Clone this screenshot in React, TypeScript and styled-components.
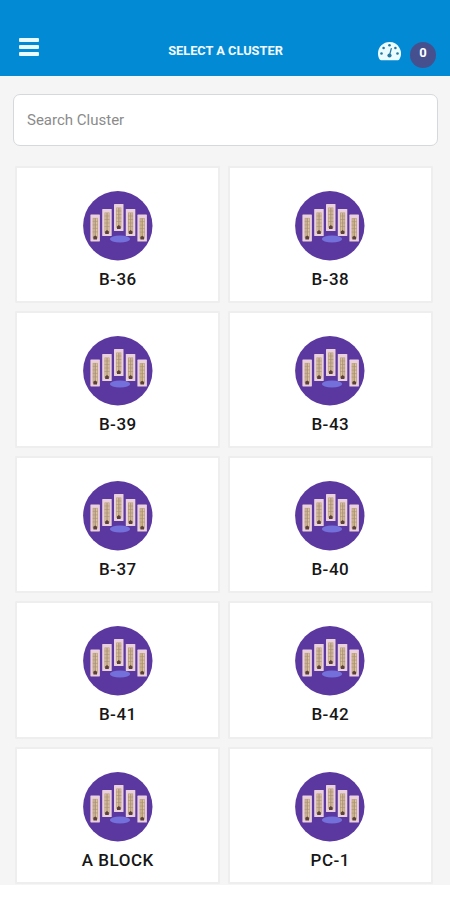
import React from "react";
import styled, { createGlobalStyle } from "styled-components";

const GlobalStyle = createGlobalStyle`
  *, *::before, *::after { box-sizing: border-box; }
  html, body { margin: 0; background: #fff; }
  body { font-family: Roboto, "Liberation Sans", sans-serif; }
`;

const Screen = styled.div`
  width: 450px;
  height: 900px;
  overflow: hidden;
  background: #fff;
`;

const Header = styled.header`
  height: 76px;
  padding: 36px 14px 0 19px;
  background: #038ad4;
  display: grid;
  grid-template-columns: 60px 1fr 60px;
  align-items: start;
`;

const MenuButton = styled.button`
  width: 20px;
  height: 20px;
  padding: 2px 0 0;
  border: 0;
  background: none;
  svg { display: block; }
`;

const Title = styled.h1`
  margin: 6px 0 0;
  padding-right: 4px;
  color: #f2fbff;
  font-size: 12.8px;
  line-height: 18px;
  font-weight: 700;
  text-align: center;
  white-space: nowrap;
`;

const Actions = styled.div`
  display: flex;
  justify-content: flex-end;
  gap: 9px;
  padding-top: 6px;
  svg { flex: none; display: block; }
`;

const CountBadge = styled.span`
  width: 26px;
  height: 26px;
  flex: none;
  border-radius: 50%;
  background: #46508f;
  color: #fff;
  font-size: 13px;
  font-weight: 700;
  line-height: 21px;
  text-align: center;
`;

const Content = styled.main`
  height: 809px;
  padding: 18px 12px 0 13px;
  background: #f5f5f6;
  overflow: hidden;
`;

const SearchInput = styled.input`
  display: block;
  width: 100%;
  height: 52px;
  padding: 0 13px 1px;
  border: 1.5px solid #d6d9db;
  border-radius: 7px;
  background: #fff;
  font: 400 15px Roboto, "Liberation Sans", sans-serif;
  color: #333;
  outline: none;
  &::placeholder { color: #8b8b8b; opacity: 1; }
`;

const Grid = styled.div`
  display: grid;
  grid-template-columns: 205px 205px;
  grid-auto-rows: 137.3px;
  column-gap: 7.5px;
  row-gap: 8px;
  padding: 19.6px 0 0 2.3px;
`;

const Card = styled.article`
  display: flex;
  flex-direction: column;
  align-items: center;
  padding-top: 23px;
  background: #fff;
  border: 2px solid #eeeeef;
  border-radius: 1px;
  svg { display: block; flex: none; }
`;

const Label = styled.div`
  margin-top: 8px;
  color: #171717;
  font-size: 17px;
  line-height: 20px;
  font-weight: 500;
  letter-spacing: 0.5px;
`;

const towers = [
  { x: 7.4, y: 23.4 },
  { x: 19.2, y: 18 },
  { x: 31, y: 13 },
  { x: 42.8, y: 18 },
  { x: 54.4, y: 23.6 },
];

const ClusterIcon = () => (
  <svg width="70" height="70" viewBox="0 0 70 70" aria-hidden="true">
    <circle cx="34.8" cy="34.8" r="34.7" fill="#5b37a0" />
    <ellipse cx="37" cy="48" rx="10.2" ry="3.5" fill="#7470db" />
    {towers.map((t) => (
      <g key={t.x} transform={`translate(${t.x} ${t.y})`}>
        <rect width="9.5" height="27" rx="0.6" fill="#ead0dc" />
        <rect x="2.3" y="3.5" width="5" height="20.5" fill="#b29a84" />
        <path d="M3.6 4v18M6.1 4v18" stroke="#dfc58e" strokeWidth="1" />
        <path d="M2.3 7h5M2.3 10.5h5M2.3 14h5M2.3 17.5h5" stroke="#a8917e" strokeWidth="0.6" />
        <path d="M3 25v-2.6l1.8-1.3 1.8 1.3V25z" fill="#5b4038" />
      </g>
    ))}
  </svg>
);

const MenuIcon = () => (
  <svg width="20" height="18" viewBox="0 0 20 18" aria-hidden="true">
    <g fill="#e9fbff">
      <rect width="20" height="4" rx="1" />
      <rect y="7" width="20" height="4" rx="1" />
      <rect y="14" width="20" height="4" rx="1" />
    </g>
  </svg>
);

const GaugeIcon = () => (
  <svg width="23" height="20" viewBox="0 0 23 20" aria-hidden="true">
    <path
      d="M11.5 0A11.5 11.5 0 0 0 0 11.5c0 2.2.6 4.3 1.7 6 .3.5.8.8 1.4.8h16.8c.6 0 1.1-.3 1.4-.8a11.5 11.5 0 0 0-9.8-17.5z"
      fill="#eafcff"
    />
    <g fill="#26789f">
      <circle cx="11.5" cy="3.3" r="1.3" />
      <circle cx="5.6" cy="6" r="1.3" />
      <circle cx="17.4" cy="6" r="1.3" />
      <circle cx="3.5" cy="11.5" r="1.3" />
      <circle cx="19.5" cy="11.5" r="1.3" />
      <circle cx="11.5" cy="13.5" r="2.1" />
    </g>
    <path d="M11.5 13.5L13.3 6.5" stroke="#26789f" strokeWidth="1.2" strokeLinecap="round" />
  </svg>
);

const clusters = ["B-36", "B-38", "B-39", "B-43", "B-37", "B-40", "B-41", "B-42", "A BLOCK", "PC-1"];

export default function App() {
  return (
    <>
      <GlobalStyle />
      <Screen>
        <Header>
          <MenuButton aria-label="Menu"><MenuIcon /></MenuButton>
          <Title>SELECT A CLUSTER</Title>
          <Actions>
            <GaugeIcon />
            <CountBadge>0</CountBadge>
          </Actions>
        </Header>
        <Content>
          <SearchInput placeholder="Search Cluster" aria-label="Search Cluster" />
          <Grid>
            {clusters.map((name) => (
              <Card key={name}>
                <ClusterIcon />
                <Label>{name}</Label>
              </Card>
            ))}
          </Grid>
        </Content>
      </Screen>
    </>
  );
}
